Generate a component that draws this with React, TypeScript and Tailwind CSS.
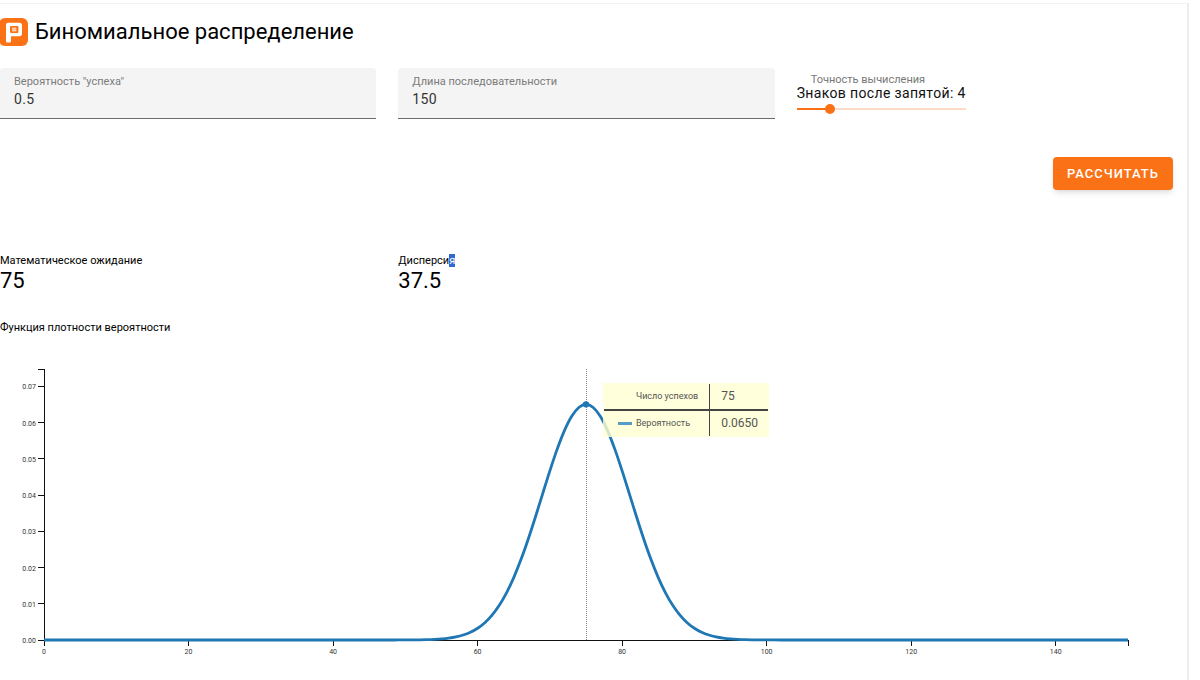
import { useState } from "react";

const PLOT = { left: 44, right: 1128, top: 11, bottom: 282 };
const Y_MAX = 0.0748;

const xTicks = [0, 20, 40, 60, 80, 100, 120, 140];
const yTicks = [0, 0.01, 0.02, 0.03, 0.04, 0.05, 0.06, 0.07];

function binomial(n: number, p: number) {
  let logCoef = 0;
  const values: number[] = [];
  for (let k = 0; k <= n; k++) {
    if (k > 0) logCoef += Math.log((n - k + 1) / k);
    values.push(Math.exp(logCoef + k * Math.log(p) + (n - k) * Math.log(1 - p)));
  }
  return values;
}

// Catmull-Rom spline through the points
function smoothPath(points: [number, number][]) {
  let d = `M${points[0][0]},${points[0][1]}`;
  for (let i = 0; i < points.length - 1; i++) {
    const p0 = points[Math.max(i - 1, 0)];
    const p1 = points[i];
    const p2 = points[i + 1];
    const p3 = points[Math.min(i + 2, points.length - 1)];
    d += `C${p1[0] + (p2[0] - p0[0]) / 6},${p1[1] + (p2[1] - p0[1]) / 6} ${p2[0] - (p3[0] - p1[0]) / 6},${p2[1] - (p3[1] - p1[1]) / 6} ${p2[0]},${p2[1]}`;
  }
  return d;
}

function Logo() {
  return (
    <svg className="size-7 shrink-0" viewBox="0 0 28 28" aria-hidden="true">
      <rect x="-1" width="29" height="28" rx="6" fill="#fb7216" />
      <path
        d="M8 4.8h11.4a2.6 2.6 0 0 1 2.6 2.6v8.2a2.6 2.6 0 0 1-2.6 2.6H11v5a1.4 1.4 0 0 1-1.4 1.4H7.4A1.4 1.4 0 0 1 6 23.2V6.8a2 2 0 0 1 2-2z"
        fill="#fff"
      />
      <rect x="10" y="8" width="8.4" height="7" rx="1" fill="#fb7216" />
      <rect x="12" y="9.4" width="4.4" height="4.2" rx="0.6" fill="#fdc9a5" />
    </svg>
  );
}

type FieldProps = {
  id: string;
  label: string;
  value: string;
  onChange: (value: string) => void;
};

function Field({ id, label, value, onChange }: FieldProps) {
  return (
    <div className="flex h-[51px] flex-col rounded-t border-b border-[#6b6b6b] bg-[#f4f4f4] px-[14px] pt-[6px]">
      <label htmlFor={id} className="text-[11px] leading-4 text-[#7b7b7b]">
        {label}
      </label>
      <input
        id={id}
        value={value}
        onChange={(e) => onChange(e.target.value)}
        className="w-full bg-transparent text-[14px] leading-[18px] tracking-wide text-[#333] outline-none"
      />
    </div>
  );
}

function Chart({ n, p }: { n: number; p: number }) {
  const x = (k: number) => PLOT.left + (k / n) * (PLOT.right - PLOT.left);
  const y = (v: number) => PLOT.bottom - (v / Y_MAX) * (PLOT.bottom - PLOT.top);
  const values = binomial(n, p);
  const active = Math.round(n * p);

  return (
    <div className="relative">
      <svg viewBox="0 0 1187 312" className="block w-full" role="img" aria-label="График">
        <g stroke="#111" fill="none" strokeWidth="1" shapeRendering="crispEdges">
          <path d={`M${PLOT.left - 6},${PLOT.top}H${PLOT.left}V${PLOT.bottom}`} />
          <path d={`M${PLOT.left},${PLOT.bottom}H${PLOT.right}v6`} />
          {xTicks.map((t) => (
            <path key={t} d={`M${x(t)},${PLOT.bottom}v6`} />
          ))}
          {yTicks.map((t) => (
            <path key={t} d={`M${PLOT.left},${y(t)}h-6`} />
          ))}
          <path
            d={`M${x(active)},${PLOT.top}V${PLOT.bottom}`}
            stroke="#888"
            strokeDasharray="1 1"
          />
        </g>
        <g fill="#333" fontSize="7">
          {xTicks.map((t) => (
            <text key={t} x={x(t)} y={PLOT.bottom + 14} textAnchor="middle">
              {t}
            </text>
          ))}
          {yTicks.map((t) => (
            <text key={t} x={PLOT.left - 8} y={y(t) + 3} textAnchor="end">
              {t.toFixed(2)}
            </text>
          ))}
        </g>
        <path
          d={smoothPath(values.map((v, k) => [x(k), y(v)]))}
          fill="none"
          stroke="#1f77b4"
          strokeWidth="2.8"
        />
        <circle cx={x(active)} cy={y(values[active])} r="3.2" fill="#1f77b4" />
      </svg>
      <div className="absolute top-[8%] left-[50.8%] bg-[#ffffd2]/80 p-px text-[#555]">
        <table className="border-collapse">
          <tbody>
            <tr className="border-b-2 border-[#444]">
              <th scope="row" className="h-[26px] border-r border-[#444] pr-[11px] pl-8 text-left text-[9px] font-normal">
                Число успехов
              </th>
              <td className="pr-[10px] pl-[11px] text-[12px]">{active}</td>
            </tr>
            <tr>
              <th scope="row" className="h-[26px] border-r border-[#444] pr-[11px] pl-[14px] text-left text-[9px] font-normal">
                <span className="flex items-center gap-1">
                  <span className="h-[3px] w-[14px] bg-[#559cc9]" />
                  Вероятность
                </span>
              </th>
              <td className="pr-[10px] pl-[11px] text-[12px]">{values[active].toFixed(4)}</td>
            </tr>
          </tbody>
        </table>
      </div>
    </div>
  );
}

export default function App() {
  const [probability, setProbability] = useState("0.5");
  const [length, setLength] = useState("150");
  const [digits, setDigits] = useState(4);
  const [result, setResult] = useState({ n: 150, p: 0.5 });

  function calculate() {
    const n = Number(length);
    const p = Number(probability);
    if (n > 0 && p > 0 && p < 1) setResult({ n, p });
  }

  return (
    <div className="min-h-screen overflow-hidden bg-white pt-[3px] pr-[11px] font-[Roboto,sans-serif] text-black">
      <main className="min-h-[677px] border-t border-r-2 border-t-[#f3f3f3] border-r-[#ededed] pt-[14px]">
        <header className="flex items-center gap-[7px]">
          <Logo />
          <h1 className="text-[22px] leading-7">Биномиальное распределение</h1>
        </header>

        <div className="mt-[22px] grid grid-cols-3 gap-[22px] pr-[14px]">
          <Field id="probability" label={'Вероятность "успеха"'} value={probability} onChange={setProbability} />
          <Field id="length" label="Длина последовательности" value={length} onChange={setLength} />
          <div className="w-fit pt-[6px]">
            <label htmlFor="digits" className="block px-[14px] text-[11px] leading-3 text-[#777]">
              Точность вычисления
            </label>
            <p className="text-[14px] leading-[14px] tracking-wide text-[#111]">Знаков после запятой: {digits}</p>
            <div
              className="mt-1 flex h-[10px] items-center bg-[length:100%_2px] bg-center bg-no-repeat"
              style={{
                backgroundImage: `linear-gradient(to right, #fb7216 ${digits * 5}%, #fcdcc8 ${digits * 5}%)`,
              }}
            >
              <input
                id="digits"
                type="range"
                min={0}
                max={20}
                value={digits}
                onChange={(e) => setDigits(Number(e.target.value))}
                className="-mx-[5px] h-[10px] w-[calc(100%+10px)] shrink-0 appearance-none bg-transparent [&::-webkit-slider-thumb]:size-[10px] [&::-webkit-slider-thumb]:appearance-none [&::-webkit-slider-thumb]:rounded-full [&::-webkit-slider-thumb]:bg-[#fb7216]"
              />
            </div>
          </div>
        </div>

        <div className="mt-[38px] flex justify-end pr-[14px]">
          <button
            type="button"
            onClick={calculate}
            className="h-[33px] rounded bg-[#fb7216] px-[14px] text-[13px] font-medium tracking-[1px] text-white uppercase shadow-md"
          >
            Рассчитать
          </button>
        </div>

        <dl className="mt-[63px] grid grid-cols-3 gap-[22px] pr-[14px]">
          <div>
            <dt className="text-[11px] leading-4">Математическое ожидание</dt>
            <dd className="text-[22px] leading-6">{result.n * result.p}</dd>
          </div>
          <div>
            <dt className="text-[11px] leading-4">
              Дисперси<span className="bg-[#3367d1] text-white">я</span>
            </dt>
            <dd className="text-[22px] leading-6">{result.n * result.p * (1 - result.p)}</dd>
          </div>
        </dl>

        <h2 className="mt-[27px] text-[11px] leading-4">Функция плотности вероятности</h2>
        <div className="mt-[22px]">
          <Chart n={result.n} p={result.p} />
        </div>
      </main>
    </div>
  );
}
